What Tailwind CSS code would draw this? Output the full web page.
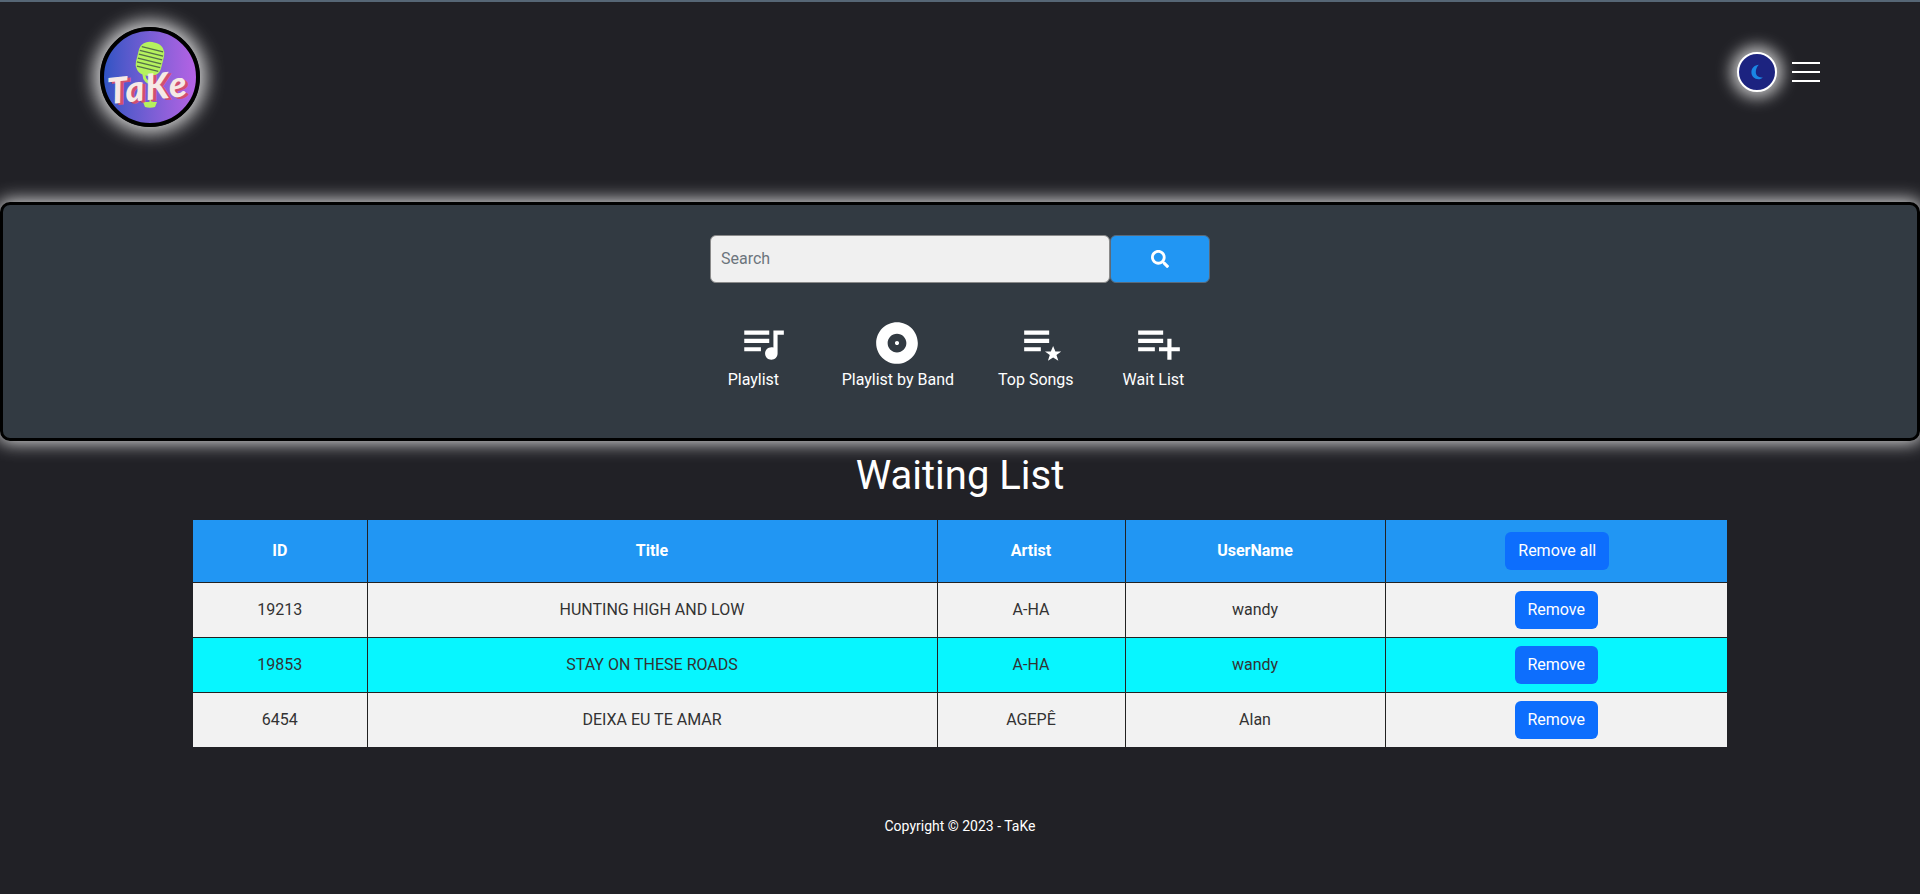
<!DOCTYPE html>
<html lang="en">
  <head>
    <meta charset="UTF-8" />
    <meta name="viewport" content="width=device-width, initial-scale=1.0" />
    <title>TaKe - Waiting List</title>
    <script src="https://cdn.jsdelivr.net/npm/@tailwindcss/browser@4"></script>
  </head>
  <body class="bg-[#212126] min-h-screen overflow-hidden text-white font-['Roboto',sans-serif]">

    <!-- Header -->
    <header class="h-[202px] border-t-2 border-[#566675] flex items-start justify-between pl-[100px] pr-[100px]">
      <div class="relative mt-[25px] w-[100px] h-[100px] rounded-full border-4 border-black bg-gradient-to-r from-[#2f54c4] to-[#b562e4] shadow-[0_0_18px_6px_rgba(255,255,255,0.8)]">
        <svg class="absolute left-[-4px] top-[-4px]" width="100" height="100" viewBox="0 0 100 100">
          <g transform="rotate(14 50 32)">
            <rect x="37" y="15" width="26" height="34" rx="11" fill="#b5f25e" />
            <path d="M39 22h22M38 26h24M38 30h24M38 34h24M38 38h24M39 42h22" stroke="#55704a" stroke-width="1.3" />
          </g>
          <path d="M44 44v4c0 5 4 8 8 8M51 56v20" stroke="#b5f25e" stroke-width="3" fill="none" />
          <path d="M43 75h14l-2 5c-3 1-7 1-10 0z" fill="#b5f25e" />
        </svg>
        <span class="absolute left-[3px] top-[33px] -rotate-6 text-[36px] leading-[44px] font-black italic tracking-[1.5px] font-['Lato',sans-serif] text-[#f6e9e6] [text-shadow:3px_2px_0_#d1506f]">TaKe</span>
      </div>
      <div class="mt-[50px] flex items-center gap-[15px]">
        <button class="w-[40px] h-[40px] rounded-full border-2 border-white bg-[#1c2380] flex items-center justify-center shadow-[0_0_15px_6px_rgba(255,255,255,0.7)]">
          <svg width="16" height="16" viewBox="0 0 16 16">
            <path fill="#1a86e4" d="M9.800.8C5.800 1 2.400 4 2.400 8.200c0 3.900 3.100 7 7 7 1.900 0 3.300-.7 4.400-1.800-3.800.7-7-1.500-7-5.300 0-3 1.200-5.600 3-7.300z" />
          </svg>
        </button>
        <div class="flex flex-col gap-[7px] w-[28px]">
          <span class="h-[2px] bg-white"></span>
          <span class="h-[2px] bg-white"></span>
          <span class="h-[2px] bg-white"></span>
        </div>
      </div>
    </header>

    <!-- Search panel -->
    <section class="h-[239px] bg-[#323a42] border-[3px] border-black rounded-[10px] shadow-[0_0_18px_2px_rgba(255,255,255,0.85)] pt-[30px]">
      <div class="flex justify-center">
        <div class="flex w-[500px] h-[48px]">
          <input type="text" placeholder="Search" class="w-[400px] h-full bg-[#f0f0f0] border border-[#8a8a8a] rounded-[6px] px-[10px] pb-[2px] text-base text-[#333] placeholder:text-[#6c757d] outline-none" />
          <button class="flex-1 h-full bg-[#2196f3] border border-[#5a6a7a] rounded-[6px] flex items-center justify-center">
            <svg width="18" height="18" viewBox="0 0 512 512" fill="#fff">
              <path d="M505 442.7L405.3 343c-4.500-4.500-10.600-7-17-7H372c27.600-35.300 44-79.700 44-128C416 93.100 322.900 0 208 0S0 93.100 0 208s93.100 208 208 208c48.300 0 92.700-16.400 128-44v16.300c0 6.400 2.500 12.500 7 17l99.700 99.700c9.400 9.400 24.600 9.400 33.900 0l28.300-28.300c9.400-9.400 9.400-24.600.1-34zM208 336c-70.700 0-128-57.200-128-128 0-70.700 57.200-128 128-128 70.700 0 128 57.200 128 128 0 70.700-57.200 128-128 128z" />
            </svg>
          </button>
        </div>
      </div>

      <nav class="mt-[35px] flex justify-center pr-2 text-base leading-6 text-white">
        <a href="#" class="flex flex-col">
          <svg class="ml-[10px]" width="50" height="50" viewBox="0 0 24 24" fill="#fff"><path d="M15 6H3v2h12V6zm0 4H3v2h12v-2zM3 16h8v-2H3v2zM17 6v8.180c-.31-.11-.65-.18-1-.18-1.660 0-3 1.340-3 3s1.340 3 3 3 3-1.340 3-3V8h3V6h-5z" /></svg>
          <span>Playlist</span>
        </a>
        <a href="#" class="flex flex-col ml-[54px]">
          <svg class="ml-[30px]" width="50" height="50" viewBox="0 0 24 24" fill="#fff"><path d="M12 2C6.480 2 2 6.480 2 12s4.480 10 10 10 10-4.480 10-10S17.520 2 12 2zm0 14.500c-2.490 0-4.500-2.010-4.500-4.500S9.510 7.500 12 7.500s4.500 2.010 4.500 4.500-2.010 4.500-4.500 4.500zm0-5.500c-.55 0-1 .45-1 1s.45 1 1 1 1-.45 1-1-.45-1-1-1z" /></svg>
          <span>Playlist by Band</span>
        </a>
        <a href="#" class="flex flex-col ml-[44px]">
          <svg class="ml-[22px]" width="50" height="50" viewBox="0 0 24 24" fill="#fff"><path d="M14 6H2v2h12V6zm0 4H2v2h12v-2zM2 14h8v2H2v-2zM15.900 13.400l1.100 2.700h2.800l-2.300 1.700.9 2.700-2.500-1.600-2.500 1.600.9-2.700-2.300-1.700h2.800z" /></svg>
          <span>Top Songs</span>
        </a>
        <a href="#" class="flex flex-col ml-[49px]">
          <svg class="ml-[11px]" width="50" height="50" viewBox="0 0 24 24" fill="#fff"><path d="M14 10H2v2h12v-2zm0-4H2v2h12V6zm4 8v-4h-2v4h-4v2h4v4h2v-4h4v-2h-4zM2 16h8v-2H2v2z" /></svg>
          <span>Wait List</span>
        </a>
      </nav>
    </section>

    <!-- Waiting list -->
    <main>
      <h1 class="mt-[11px] mb-[20px] text-center text-[40px] leading-[48px] font-normal">Waiting List</h1>
      <table class="mx-auto w-[1534px] table-fixed border-collapse text-center text-base text-[#333]">
        <colgroup>
          <col class="w-[174px]" />
          <col class="w-[570px]" />
          <col class="w-[188px]" />
          <col class="w-[260px]" />
          <col class="w-[342px]" />
        </colgroup>
        <thead>
          <tr class="h-[62px] bg-[#2196f3] text-white font-bold border-b border-[#222]">
            <th>ID</th>
            <th class="border-l border-[#222]">Title</th>
            <th class="border-l border-[#222]">Artist</th>
            <th class="border-l border-[#222]">UserName</th>
            <th class="border-l border-[#222]">
              <button class="ml-[2px] h-[38px] w-[104px] rounded-[6px] bg-[#0d6efd] text-white font-normal">Remove all</button>
            </th>
          </tr>
        </thead>
        <tbody>
          <tr class="h-[55px] bg-[#f2f2f2] border-b border-[#222]">
            <td>19213</td>
            <td class="border-l border-[#222]">HUNTING HIGH AND LOW</td>
            <td class="border-l border-[#222]">A-HA</td>
            <td class="border-l border-[#222]">wandy</td>
            <td class="border-l border-[#222]"><button class="h-[38px] w-[83px] rounded-[6px] bg-[#0d6efd] text-white">Remove</button></td>
          </tr>
          <tr class="h-[55px] bg-[#07f6ff] border-b border-[#222]">
            <td>19853</td>
            <td class="border-l border-[#222]">STAY ON THESE ROADS</td>
            <td class="border-l border-[#222]">A-HA</td>
            <td class="border-l border-[#222]">wandy</td>
            <td class="border-l border-[#222]"><button class="h-[38px] w-[83px] rounded-[6px] bg-[#0d6efd] text-white">Remove</button></td>
          </tr>
          <tr class="h-[55px] bg-[#f2f2f2]">
            <td>6454</td>
            <td class="border-l border-[#222]">DEIXA EU TE AMAR</td>
            <td class="border-l border-[#222]">AGEPÊ</td>
            <td class="border-l border-[#222]">Alan</td>
            <td class="border-l border-[#222]"><button class="h-[38px] w-[83px] rounded-[6px] bg-[#0d6efd] text-white">Remove</button></td>
          </tr>
        </tbody>
      </table>
    </main>

    <footer class="mt-[69px] text-center text-sm leading-5 font-normal text-white">
      Copyright © 2023 - TaKe
    </footer>
  </body>
</html>
